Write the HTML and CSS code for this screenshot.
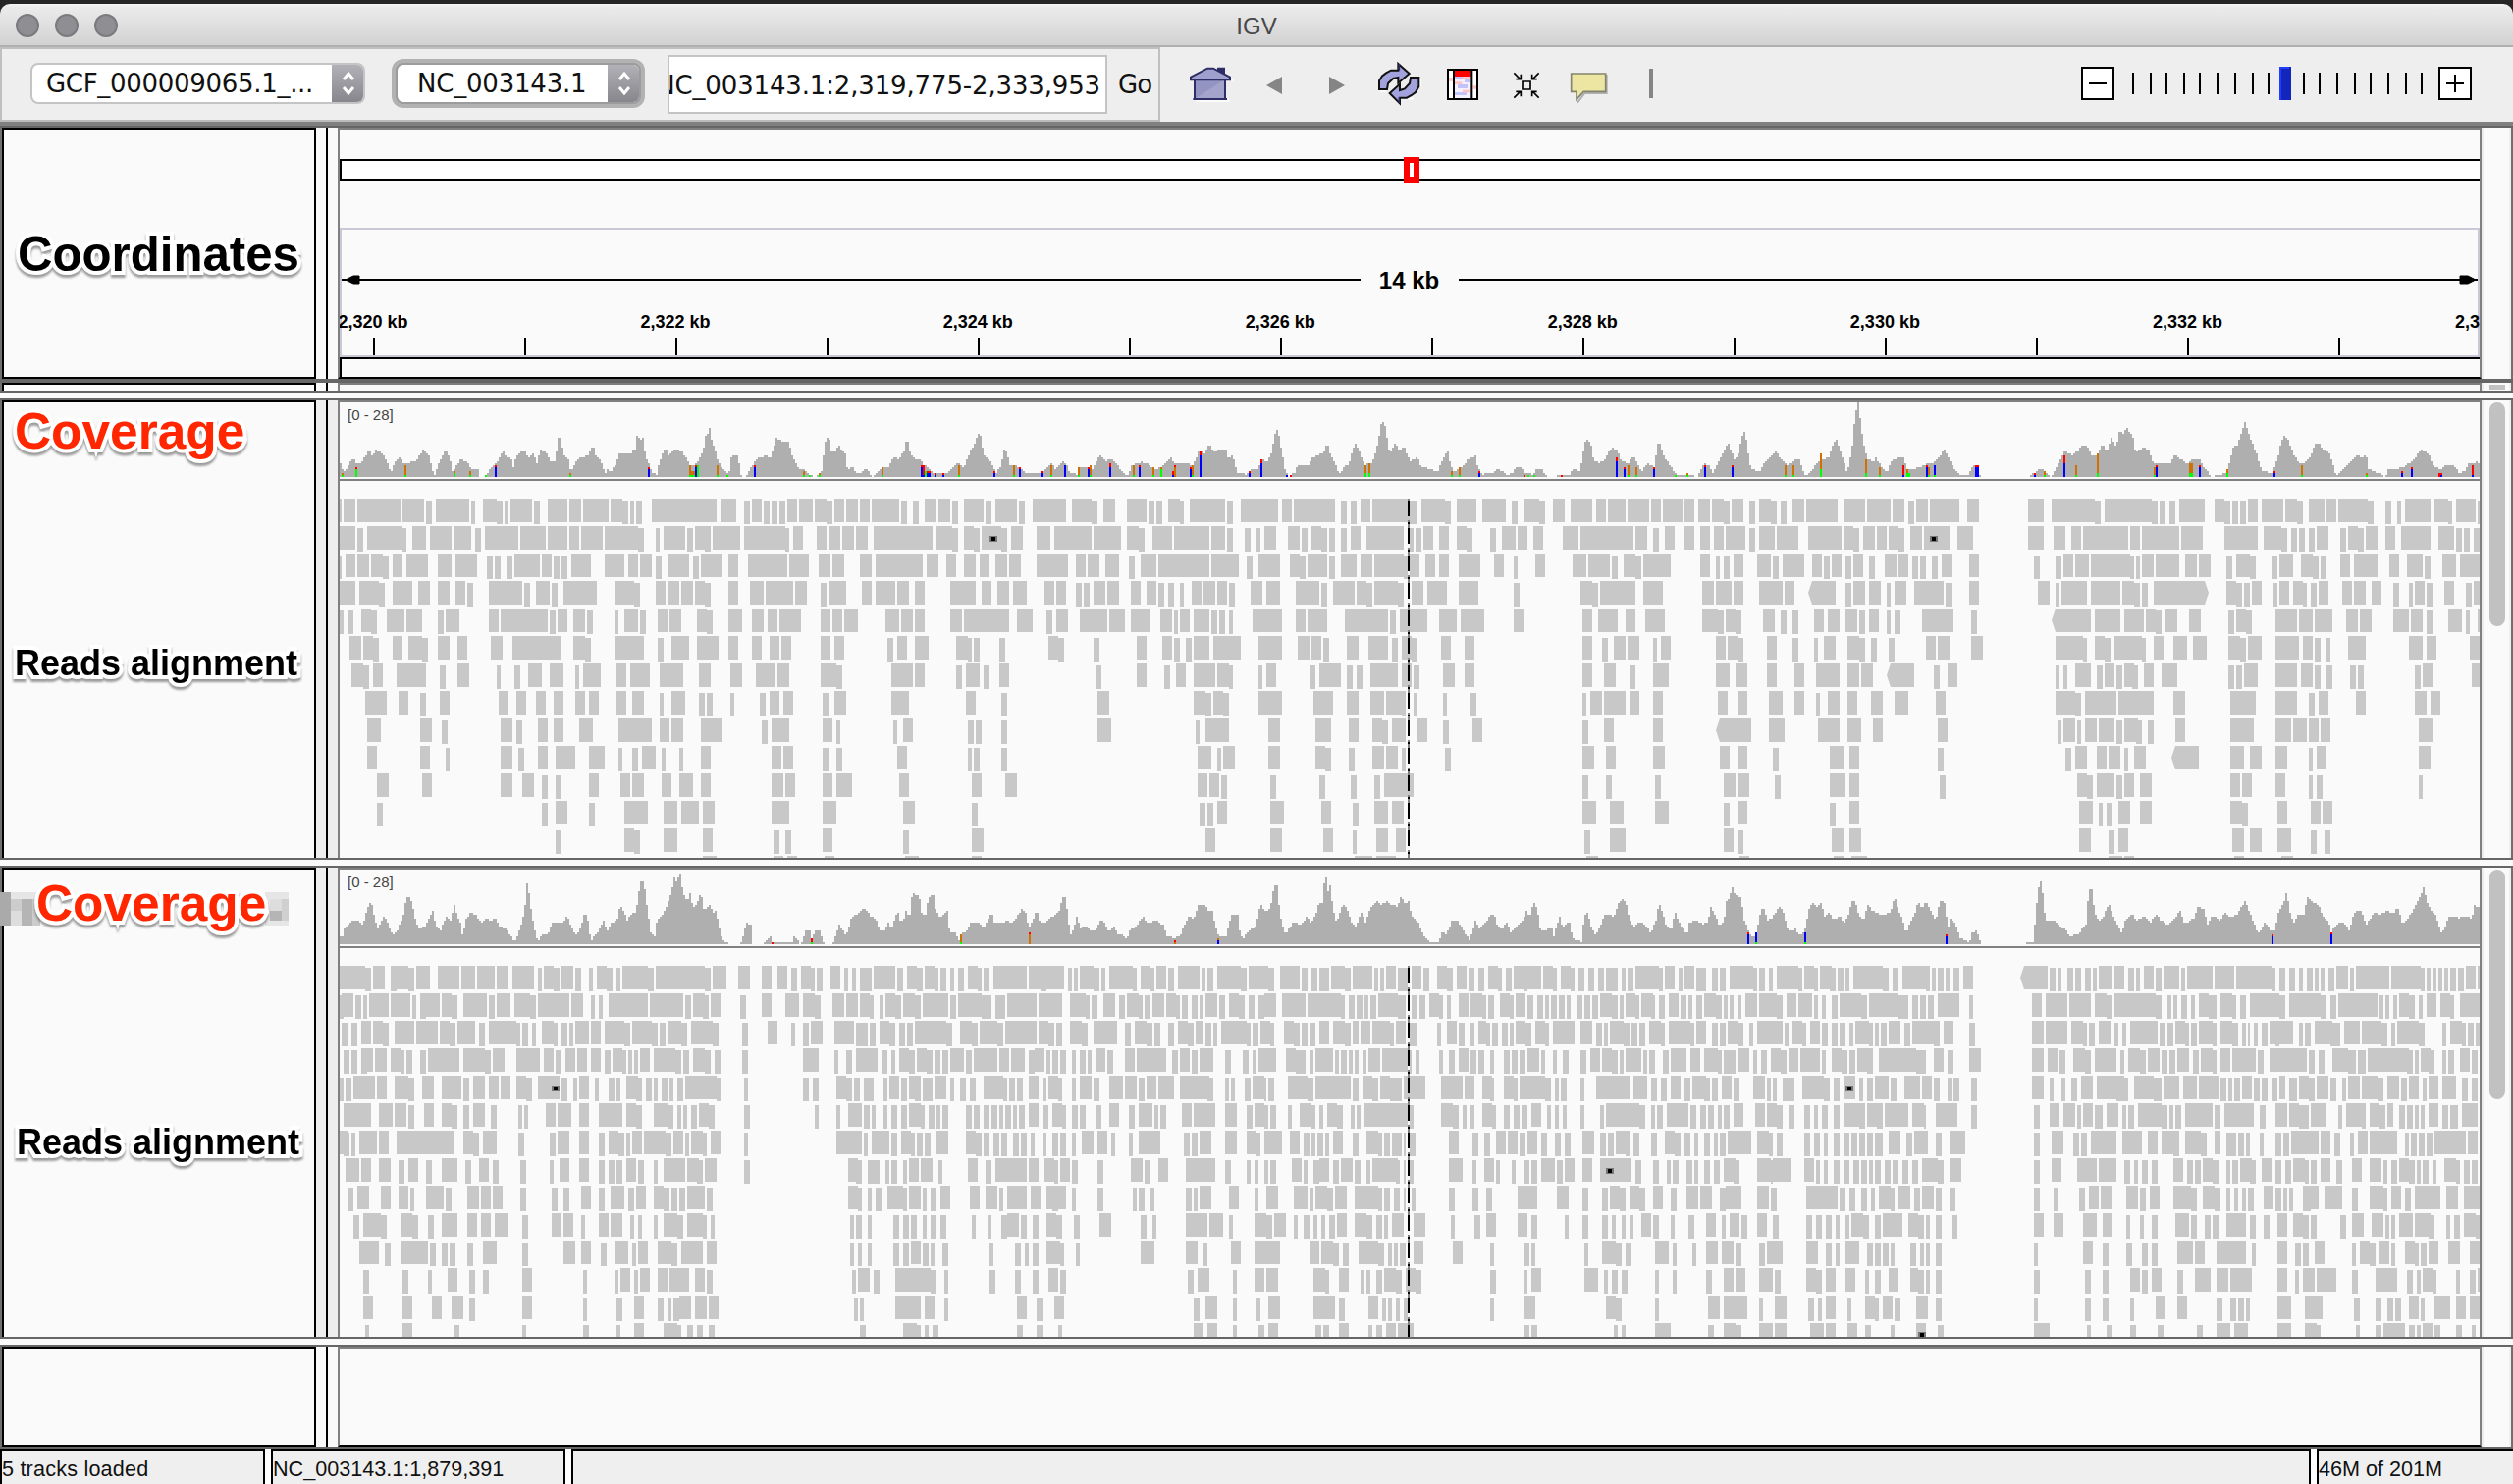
FILE: index.html
```html
<!DOCTYPE html>
<html lang="en">
<head>
<meta charset="utf-8">
<title>IGV</title>
<link rel="stylesheet" href="styles.css">
</head>
<body>
<div class="desktop">
  <header class="titlebar">
    <div class="lights"><i></i><i></i><i></i></div>
    <h1>IGV</h1>
  </header>

  <nav class="toolbar">
    <div class="locus-group">
      <div class="combo genome"><span>GCF_000009065.1_...</span><b><svg viewBox="0 0 34 42"><path d="M12 17l5-6 5 6M12 25l5 6 5-6"/></svg></b></div>
      <div class="combo chrom"><span>NC_003143.1</span><b><svg viewBox="0 0 34 42"><path d="M12 17l5-6 5 6M12 25l5 6 5-6"/></svg></b></div>
      <div class="locus"><span>NC_003143.1:2,319,775-2,333,953</span></div>
      <span class="go">Go</span>
    </div>
    <div class="icons">
      <svg viewBox="33 9 192 192"><path d="M84 159H184V150M196 98V90" stroke="#fff" stroke-width="5" fill="none"/><path d="M150 56h24v26l-24-12z" fill="#2e2d66"/><path d="M81 92h93v60H81z" fill="#a3a3cc"/><path d="M81 92h93l-93 60z" fill="#8686b8" opacity=".5"/><path d="M69 88l51-31h18l51 31v6H69z" fill="#a0a0cf"/><path d="M69 94v-8l51-27h18l51 27v8zM81 95v57M174 95v57M76 153h104" fill="none" stroke="#2e2d66" stroke-width="6"/></svg>
      <svg viewBox="225 9 192 192"><path d="M300 111l48-27v54z" fill="#858585"/></svg>
      <svg viewBox="417 9 192 192"><path d="M540 111l-48-27v54z" fill="#858585"/></svg>
      <svg viewBox="609 9 192 192"><path d="M648 129h18M708 168v-9M730 152h20M771 90v25" stroke="#fff" stroke-width="5"/><path d="M645 123v-26l9-15 12-9 15-8h22V45l34 30-34 29V87l-15 3-16 15-3 18z" fill="#a2a2dc" stroke="#111" stroke-width="6"/><path d="M766 87v28l-10 17-12 9-15 8h-21v17l-31-31 31-28v19l15-5 15-16 3-18z" fill="#a2a2dc" stroke="#111" stroke-width="6"/><path d="M706 45v20M706 165v-18" stroke="#2e2d66" stroke-width="5"/></svg>
      <svg viewBox="801 9 192 192"><path d="M855 63h90v90h-90z" fill="#f4f0ff"/><path d="M855 66h18v84h-18zM930 66h15v84h-15z" fill="#fff"/><path d="M876 63h50v21h-50z" fill="#f00"/><path d="M876 84h24v9h-24zM906 90h18v12h-18zM885 108h30v12h-30zM876 132h36v9h-36z" fill="#c3c3fb"/><path d="M900 84h25v7h-25zM876 100h22v8h-22zM900 125h22v8h-22zM857 88h14v10h-14zM932 112h12v10h-12z" fill="#ffc4c4"/><path d="M855 63h90v90h-90zM873 63v90M928 63v90" fill="none" stroke="#000" stroke-width="6"/></svg>
      <svg viewBox="993 9 192 192"><path d="M1083 99h24v24h-24zM1057 73l20 20M1133 73l-20 20M1057 149l20-20M1133 149l-20-20M1063 92h15v-15M1127 92h-15v-15M1063 130h15v15M1127 130h-15v15" fill="none" stroke="#000" stroke-width="5"/></svg>
      <svg viewBox="1185 9 192 192"><path d="M1340 78v57h-67l-22 29" fill="none" stroke="#b0b0b0" stroke-width="6"/><path d="M1232 75h105v55h-67l-22 24v-24h-16z" fill="#ece6a2" stroke="#84846c" stroke-width="5"/></svg>
      <svg viewBox="1377 9 192 192"><path d="M1470 60h12v90h-12z" fill="#858585"/></svg>
    </div>
    <svg class="zoom" viewBox="2120 68 398 34" shape-rendering="crispEdges">
      <path d="M2121 69h32v32h-32zM2485 69h32v32h-32z" fill="#fff" stroke="#000" stroke-width="2"/>
      <path d="M2128 85h18M2492 85h18M2501 76v18M2173 74v22M2191 74v22M2207 74v22M2225 74v22M2241 74v22M2259 74v22M2277 74v22M2295 74v22M2311 74v22M2347 74v22M2363 74v22M2381 74v22M2399 74v22M2415 74v22M2433 74v22M2451 74v22M2467 74v22" stroke="#000" stroke-width="2"/>
      <path d="M2322 68h12v34h-12z" fill="#1226bd"/><path d="M2322 68h10v2h-8v32h-2z" fill="#1f3cff"/>
    </svg>
  </nav>
  <div class="band"></div>

  <section class="panel header">
    <div class="name"><span class="label big">Coordinates</span></div>
    <div class="split"></div>
    <div class="data"><svg id="ruler" viewBox="346 132 2180 252"></svg></div>
    <div class="scroll"></div>
  </section>
  <div class="bar"></div>
  <section class="panel mini">
    <div class="name"></div><div class="split"></div><div class="data"></div><div class="scroll"><i></i></div>
  </section>
  <div class="divider"></div>
  <section class="panel first">
    <div class="name"><span class="label red">Coverage</span><span class="label small">Reads alignment</span></div>
    <div class="split"></div>
    <div class="data"><svg id="sample1" viewBox="346 410 2180 464"></svg></div>
    <div class="scroll"><i></i></div>
  </section>
  <div class="divider"></div>
  <section class="panel second">
    <div class="name"><svg class="mosaic" viewBox="0 0 296 34"><path fill="#e6e6e6" d="M11 0h30v34H11zM270 0h24v34h-24z"/><path fill="#aaa" d="M0 0h11v34H0z"/><path fill="#ccc" d="M11 7h11v12H11zM33 7h8v27h-8z"/><path fill="#b5b5b5" d="M22 7h11v27H22zM275 19h12v10h-12z"/><path fill="#ddd" d="M11 19h11v15H11zM275 7h12v12h-12z"/><path fill="#d0d0d0" d="M287 7h7v22h-7z"/></svg><span class="label red">Coverage</span><span class="label small">Reads alignment</span></div>
    <div class="split"></div>
    <div class="data"><svg id="sample2" viewBox="346 886 2180 476"></svg></div>
    <div class="scroll"><i></i></div>
  </section>
  <div class="divider"></div>
  <section class="panel last">
    <div class="name"></div><div class="split"></div><div class="data"></div><div class="scroll"></div>
  </section>
  <div class="thin"></div>
  <footer class="status">
    <span>5 tracks loaded</span><span>NC_003143.1:1,879,391</span><span></span><span>46M of 201M</span>
  </footer>
</div>
<script src="tracks.js"></script>
</body>
</html>
```
FILE: styles.css
```css
* { box-sizing: border-box; }
body { margin: 0; background: #262626; font-family: "Liberation Sans", Arial, sans-serif; }
.desktop { width: 2560px; height: 1512px; padding-top: 4px; display: flex; flex-direction: column; overflow: hidden; background: #262626; }
.desktop > * { flex: none; }
svg { display: block; }

.titlebar { height: 44px; display: grid; grid-template-columns: 1fr auto 1fr; align-items: center; background: linear-gradient(#f6f6f6 0, #ebebeb 3px, #d2d2d2 100%); border-bottom: 2px solid #b0b0b0; border-radius: 10px 10px 0 0; }
.titlebar h1 { margin: 0; padding-top: 3px; font-size: 24px; font-weight: 400; color: #484848; }
.lights { display: flex; gap: 16px; padding: 2px 0 0 16px; }
.lights i { width: 24px; height: 24px; border-radius: 50%; background: #8e8e93; border: 2px solid #7b7b7f; }

.toolbar { height: 76px; display: flex; background: #eee; font-family: "DejaVu Sans", sans-serif; color: #111; }
.locus-group { width: 1182px; height: 76px; border: 2px solid #c0c0c0; border-bottom-color: #bbb; display: flex; padding-left: 29px; }
.combo { display: flex; height: 42px; margin-top: 14px; border-radius: 8px; background: #fff; border: 2px solid #c4c4c4; line-height: 39px; overflow: hidden; }
.combo span { flex: 1; white-space: nowrap; font-size: 26px; }
.combo b { width: 34px; margin: -2px -2px -2px 0; background: linear-gradient(#b4b3b9, #85848b); }
.combo path { fill: none; stroke: #fff; stroke-width: 3; }
.genome { width: 341px; }
.genome span { padding-left: 14px; letter-spacing: -.3px; }
.chrom { width: 250px; margin-left: 31px; box-shadow: 0 0 0 4px #b2b2b2; border-color: #9c9c9c; }
.chrom span { padding-left: 20px; letter-spacing: -.2px; }
.locus { width: 448px; height: 60px; margin: 6px 0 0 27px; background: #fff; border: 2px solid #c4c4c4; display: flex; justify-content: flex-end; align-items: center; overflow: hidden; font-size: 26px; letter-spacing: -.15px; padding: 2px 5px 0 0; }
.locus span { white-space: nowrap; margin-left: -60px; }
.go { margin: 21px 0 0 11px; font-size: 26px; letter-spacing: -1px; }
.icons { display: flex; padding: 5px 0 0 19px; }
.icons svg { width: 64px; height: 64px; }
.zoom { width: 398px; height: 34px; margin: 20px 0 0 407px; flex: none; }
.band { height: 6px; background: #808080; border-bottom: 2px solid #666; }

.panel { display: grid; grid-template-columns: 320px 22px 2184px 30px; padding: 0 2px; background: #707070; }
.panel > * { background: #fafafa; min-width: 0; }
.panel .name { border: 2px solid #000; border-bottom: 0; overflow: hidden; display: flex; flex-direction: column; align-items: flex-start; }
.panel .split { background: linear-gradient(90deg, transparent 10px, #000 10px, #000 12px, transparent 12px) #fafafa; }
.panel .data { border: 2px solid #808080; border-bottom: 0; overflow: hidden; }
.data svg { width: 2180px; height: 100%; }
.scroll { padding: 2px 6px 0 8px; box-shadow: inset 2px 0 #ececec, inset -2px 0 #f0f0f0; }
.scroll i { display: block; width: 16px; border-radius: 8px; background: #c1c1c1; }
.header { height: 256px; }
.header .name, .header .data, .last .name, .last .data { border-bottom-style: solid; border-bottom-width: 2px; }
.mini { height: 8px; }
.mini i { height: 5px; border-radius: 0; }
.first { height: 466px; }
.first i { height: 228px; }
.second { height: 478px; }
.second i { height: 234px; }
.first .split, .second .split { background-color: #eee; }
.last { height: 102px; }
.bar { height: 4px; background: #666; }
.thin { height: 2px; background: #666; }
.divider { height: 10px; background: #fafafa; border: solid #666; border-width: 2px 0; }

.label { font-weight: 700; line-height: 1; white-space: nowrap; -webkit-text-stroke: 8px #fff; paint-order: stroke fill; filter: drop-shadow(0 3px 1px rgba(0, 0, 0, .38)); }
.label.big { font-size: 49.2px; margin: 102px 0 0 14px; }
.label.red { font-size: 51.4px; line-height: 51px; color: #ff2600; }
.label.small { font-size: 36px; color: #000; }
.first .red { margin: 4px 0 0 11px; }
.first .small { margin: 193px 0 0 11px; }
.second .mosaic { position: absolute; left: 0; top: 909px; width: 296px; height: 34px; }
.second .red { margin: 9px 0 0 33px; }
.second .small { margin: 200px 0 0 13px; }

.status { height: 36px; display: grid; grid-template-columns: 270px 300px 1772px 200px; gap: 6px; background: #fff; font-size: 21.6px; color: #111; }
.status span { background: #efefef; border: 2px solid #000; border-bottom: 0; line-height: 37px; white-space: nowrap; overflow: hidden; }
.status span:first-child { letter-spacing: .2px; }
.status span:last-child { border-right: 0; }

.cov { fill: #afafaf; }
.reads { fill: #c8c8c8; }
.range { font-size: 15px; fill: #444; }
.tick { font-size: 18px; font-weight: 700; text-anchor: middle; }
.span { font-size: 24px; font-weight: 700; text-anchor: middle; }
```
FILE: tracks.js
```js
// Reads: "a-b" sits on the row, "a_b" is drawn 2px lower, "a<b" / "a>b" have a tapered end.
// Coverage: "x,y" knots. Mismatches: x followed by colour letter + top y, stacked downwards.
const X = 1.96, W = 1.6333;
const sample1 = { top: 508, base: 486, line: 488, bottom: 874, tiles: [
{ x: 0, k: X, base: 318, ky: 3,
 cov: '678,276 682,276 686,306 698,276 706,258 712,276 720,276 728,258 738,234 742,254 751,234 755,240 759,240 768,258 776,285 780,306 788,276 798,258 806,276 830,270 845,234 856,250 862,288 868,312 876,276 890,236 898,258 903,300 910,288 920,260 935,275 942,294 955,297 959,318 966,318 973,312 980,288 990,276 1005,240 1012,258 1020,255 1025,288 1030,258 1045,237 1058,258 1066,246 1072,276 1080,234 1086,246 1090,237 1098,270 1110,268 1113,198 1120,200 1124,235 1128,258 1136,262 1140,306 1148,276 1160,258 1175,252 1184,218 1190,252 1200,270 1208,306 1214,294 1220,306 1230,276 1237,246 1260,246 1264,234 1270,234 1272,192 1278,205 1284,198 1288,246 1298,288 1304,306 1312,312 1316,276 1328,228 1335,250 1348,232 1362,240 1372,264 1380,285 1386,280 1396,264 1404,240 1408,195 1413,188 1417,165 1420,200 1428,234 1434,270 1442,290 1455,310 1461,252 1474,252 1478,304 1482,318 1490,318 1500,288 1510,264 1530,252 1537,264 1545,228 1550,198 1568,213',
 snp: '684o306g312 711r288g294 809o282g312 907o300g306 939o300g312 970g312 990r282b288 1139o306g312 1296r288b294 1378o282g312 1382o300g312 1386o300g312 1390r282b288 1394g285 1433o282g312 1452g312 1507r282b288',
 rows: `678-682 686-710 713-800 804-847 851_862 870-937 941_949 964-992 992_1004 1007_1015 1019-1062 1066_1078 1094-1133 1137-1160 1164-1215 1219-1243 1243_1254 1258_1266 1270_1282 1301-1431 1439-1470 1486_1497 1501-1521 1525_1537 1541_1552 1556_1568
678-710 713_725 733-804 804_811 823-851 858-902 906-941 949_960 968-1035 1039-1090 1094-1133 1137-1156 1160-1203 1207-1274 1274_1286 1309_1317 1325-1368 1372_1384 1388-1419 1407_1419 1423-1478 1486-1568
678_682 690-710 713-737 741-764 764_776 784-804 811-855 874-902 909-953 972_984 988_1000 1011_1023 1027-1078 1082-1102 1105_1117 1121_1133 1141-1180 1207-1247 1254-1274 1278-1301 1309_1321 1333-1376 1384_1396 1399-1443 1454-1474 1494-1568
678-710 717-757 757_768 784-823 835-858 874-898 909-929 933_945 976-1043 1047_1058 1070-1098 1102_1113 1125-1192 1227-1266 1266_1278 1309-1329 1333-1356 1360-1384 1388-1407 1407_1419 1454-1474 1497-1525 1529-1568
678_686 694_706 721-741 741_753 772-808 811-843 874_886 890-917 976-996 1000-1094 1098_1109 1113-1133 1145-1168 1172_1184 1227_1235 1247-1274 1278_1290 1313-1333 1337-1360 1392-1411 1411_1423 1454-1482 1501-1525 1533-1552 1556-1568
698-721 725-745 745_757 784-804 815-843 843_855 874-898 913-933 980-1004 1023-1121 1145-1168 1168_1180 1227-1286 1313_1325 1341-1376 1392-1435 1454-1474 1501-1521 1537-1556 1560-1568
702-725 725_737 745-764 792-851 878_890 913-937 992_1000 1027_1039 1054-1082 1098-1125 1149_1156 1164-1200 1231-1250 1258-1298 1317-1364 1396-1419 1458-1482 1509-1548 1552-1568
729-772 796-815 839_851 878-898 996-1015 1031-1051 1070-1090 1105-1125 1149-1168 1176-1196 1231-1250 1262-1286 1317_1325 1341-1368 1396_1407 1411_1423 1458_1466 1517_1529 1537-1556 1564-1568
733-760 839-862 882_894 1000-1023 1031_1043 1074-1094 1105-1125 1156-1184 1235-1301 1317-1337 1341-1364 1399-1443 1521_1533 1541-1568
733-753 839-858 890_898 1000-1023 1035_1047 1074-1094 1109-1149 1176-1207 1235_1243 1262_1274 1282-1309 1321_1329 1356_1364 1399-1419 1541-1560 1564-1568
753-776 843-862 1000-1023 1043-1066 1082_1094 1109_1121 1176-1196 1239-1258 1262-1286 1321-1341 1356-1384 1399-1419 1541-1564
753_764 1082_1094 1109-1133 1176_1188 1247-1294 1325-1352 1360-1396 1403-1427 1541-1568
1109_1121 1247-1266 1266_1278 1325-1352 1403-1423 1544_1556
1403-1431 1544-1564` },
{ x: 800, k: X, base: 258, ky: 3,
 cov: '0,150 8,150 12,186 20,210 28,232 40,236 48,250 58,258 66,252 72,246 78,174 82,132 88,140 92,180 100,182 106,156 112,172 120,186 124,232 136,230 142,246 150,250 158,232 166,236 172,258 182,246 195,228 206,228 212,205 218,195 226,205 232,188 238,180 243,132 247,172 256,200 270,204 276,220 286,228 296,246 322,248 332,234 345,216 356,228 366,196 370,174 378,160 384,126 390,134 396,186 404,204 412,216 420,246 430,225 437,174 443,186 449,222 458,222 470,230 482,246 510,246 522,230 530,214 540,234 552,212 560,214 568,246 582,250 586,228 604,226 614,234 622,208 628,192 640,208 648,202 662,216 674,246 684,254 692,222 710,212 722,216 734,234 750,230 760,212 770,200 778,216 790,214 804,216 812,222 820,205 826,174 836,186 846,156 856,180 868,174 880,174 884,200 894,192 902,246 922,250 932,234 944,232 952,198 960,216 970,190 974,160 980,108 986,134 992,186 998,234 1006,258 1018,242 1024,220 1046,222 1052,200 1066,188 1076,180 1082,150 1088,188 1098,216 1106,252 1114,230 1126,218 1132,180 1138,156 1144,168 1150,198 1158,220 1172,212 1180,174 1186,130 1190,96 1196,90 1201,132 1204,172 1210,180 1218,150 1224,176 1236,164 1240,186 1248,210 1262,196 1270,228 1292,234 1302,246 1312,205 1322,176 1328,216 1336,246 1346,230 1354,222 1362,206 1378,192 1382,222 1390,250 1415,246 1422,235 1434,240 1442,252 1452,245 1460,230 1470,230 1476,246 1492,250 1500,234 1512,234 1518,252 1524,258 1538,258 1540,253 1568,253',
 snp: '37o240g252 49g252 69o246g252 194o228g252 272r222b228 276r222b252 282g240 286r240b246 290r240b246 300r246b252 316r246b252 347o222g252 417r240b246 457o222g252 467r228b234 512r240b246 531o222g252 559b222 586o228g252 606r228b234 610o222g252 649r216b228 696o222g252 708r222b228 735o228g252 751o228g234 774r240b252 778r222o228 809r228b234 813o222g252 829r180b192 927r240b246 951r204b216 1002b252 1009r252 1158o222g246 1166o216g246 1331o240g252 1346o228g252 1386r240b246 1476r252 1484g252 1496g252 1550r252',
 rows: `4-24 27-55 59-82 82_94 98-118 122-145 149-169 172-227 231_243 255_267 278-302 306-329 333_345 357-396 400_412 419-463 466_478 494-561 572-612 612_623 635-659 682-721 725_737 741_752 764-788 788_796 808-878 882_894 909-984 992-1011 1015-1098 1109_1121 1129_1141 1149-1168 1172-1247 1247_1262 1270-1317 1317_1329 1341-1380 1392-1439 1450_1462 1474-1505 1505_1517 1533-1556
0_8 16-35 63-82 86-110 114-137 141-165 176-294 302-333 333_345 357-376 376_388 392-431 431_443 451-474 502-529 537-612 615-670 682-706 706_717 733-772 776-847 851-878 882_894 917_929 941_949 956-980 1004-1027 1031_1043 1051-1070 1070_1082 1086_1098 1109_1121 1129-1149 1160-1235 1247_1254 1258_1270 1274-1294 1305-1325 1341-1360 1360_1372 1407_1419 1431-1458 1462-1482 1494-1513 1552-1568
0-4 7-47 67-90 94-118 149-172 180-274 282-306 321-341 357-380 388-408 419-443 447-470 502-564 580-600 604-627 639-666 686_698 710-741 745-847 851-906 921_933 945-988 1007-1027 1027_1039 1043-1082 1086_1098 1109-1141 1149-1172 1176-1235 1235_1243 1247-1266 1278-1298 1305-1325 1345-1388 1415-1435 1454_1462 1497-1517
0-16 20-43 71_82 86-122 153-172 180-220 223-247 259-278 329-380 392-412 423-447 455-482 517-537 541-561 580_592 596_608 615-639 643-666 690-710 721-741 745_757 764_776 788_796 811-831 835-858 862-882 886_898 929-953 960-988 1019-1066 1070_1082 1094-1137 1141-1160 1160_1172 1176-1223 1223_1235 1250-1274 1282-1321 1345-1384 1454_1466
0-31 71-90 94-114 118-145 200-227 231-255 259-278 329-353 357-447 463-494 521_533 541-564 588-643 647-678 690-729 749-772 776_784 788-808 815-847 851_862 866_878 886_894 933-992 1019-1039 1043-1082 1117-1203 1207_1219 1227-1282 1305-1341 1348-1396 1454-1474
0-12 71-90 98-118 204_216 223-243 259-286 341-365 365_372 376_388 427_439 525-545 545_557 615_627 702-721 753-772 776_788 800_811 815-847 855-909 945-992 1023-1047 1051-1070 1074_1086 1121-1145 1164-1203 1211_1223 1231-1250 1250_1262 1309-1329 1356-1376
0-8 71-102 102_114 212-255 259-278 341_353 361-388 396_408 427-447 619_631 702-721 757_768 780-800 815-858 862-886 886_894 945_953 960-980 1047_1058 1065-1109 1121_1133 1141_1152 1168-1223 1231-1250 1254_1266 1313-1337 1356-1376
0-16 74_86 98-122 212-247 361-380 431_443 623-647 815-839 839_851 855-874 874_886 945-992 1054-1094 1121-1145 1168-1196 1200-1239 1231_1239 1254_1262 1313_1321 1368_1380
0-8 74-94 102_110 216_223 235-255 365_376 380_392 431_443 623-651 819_827 839-886 964-988 1058-1090 1125-1145 1172-1192 1192_1203 1211-1239 1262-1282 1313_1325 1372-1392
0-16 74_86 102_114 223-243 365_372 376_388 431_443 823-851 862_870 874-898 964-988 1058-1078 1078_1090 1125_1137 1172-1196 1200-1223 1231_1239 1317_1329
0-20 74-94 102-133 227-247 372-392 439-463 823-843 847-866 870_882 968_980 1066_1078 1129_1141 1176_1188 1196-1254
0-8 74-102 235-259 372_384 827_839 843_855 862-882 968-996 1070-1090 1133_1145 1176-1203 1211-1235
0_12 74-94 235_247 372-396 839-858 968-992 1074-1094 1133_1141 1180-1203 1219-1239
4-24 78-98 239-267 372-392 1137-1172 1180-1219` },
{ x: 1600, k: W, base: 318, ky: 3,
 cov: '0,306 6,294 16,300 22,230 26,198 34,216 38,264 48,276 58,264 64,240 70,228 78,236 84,270 96,276 104,252 112,280 118,300 128,276 140,290 144,220 149,216 156,256 168,290 176,312 206,314 210,318 216,300 222,276 230,282 236,306 244,280 252,252 262,212 268,240 274,270 280,240 286,190 290,174 296,250 300,294 316,300 322,276 334,256 342,238 350,262 360,282 370,272 380,258 388,306 392,318 400,300 410,276 420,264 430,258 436,222 442,198 448,236 456,280 460,304 468,240 472,156 477,90 480,90 482,145 488,220 494,264 504,270 508,258 514,276 526,306 534,270 544,258 554,260 560,294 580,290 594,276 606,272 614,258 622,234 630,262 638,294 648,312 662,312 670,280 676,280 680,312 688,318 764,318 770,306 782,292 790,300 798,318 804,306 812,276 822,240 834,250 844,240 852,216 860,228 868,252 876,250 886,216 892,240 900,198 908,228 914,174 918,188 926,168 936,198 940,240 952,228 962,234 970,276 998,276 1006,246 1014,262 1026,276 1036,264 1046,264 1052,282 1064,312 1066,318 1076,312 1090,306 1098,264 1102,228 1110,220 1116,180 1122,150 1128,186 1136,220 1142,250 1150,300 1168,306 1176,264 1180,228 1188,186 1196,214 1202,244 1212,276 1220,276 1232,252 1238,216 1246,216 1252,234 1262,240 1268,276 1274,318 1282,300 1294,276 1308,252 1316,258 1324,252 1328,294 1350,310 1356,318 1360,294 1384,290 1394,276 1404,264 1414,234 1428,248 1434,282 1448,294 1456,280 1470,282 1478,306 1490,300 1492,276 1504,276 1508,270 1513,282',
 snp: '76r258b270 90r288b294 97o282g312 110o288g312 138r288b294 174g312 195o306g312 223r282b288 269r282b288 357o282g312 371o282g312 416o246g294 491o264g306 515o288g312 553r282b312 561o294g306 565o306g306 593r282b288 597o288g312 606b282g312 675r282b288 679r282b288 772r306b312 789o300g312 821r252b276 841o282g312 877o246g306 971o288g312 975r282b288 1031o276g306 1034o276g306 1047r282b288 1092o294g306 1171r300b306 1216o282g312 1324o306g312 1383r300b306 1399r288b294 1446r306 1450r306b312 1501r282b312',
 rows: `0-36 42-59 62-91 95-131 134-150 154-186 189-206 212-232 235-255 255_265 268-287 297_307 314-333 333_343 350_359 369-389 392-444 454-490 493-532 536-555 562_572 575-595 598-647 660-679 761-787 800-872 872_882 889-967 967_977 980_990 996_1006 1013-1055 1071-1088 1088_1098 1101_1111 1114_1124 1127-1143 1150-1186 1189-1209 1209_1218 1228-1254 1258-1274 1277-1326 1326_1336 1356_1365 1375_1382 1388-1431 1437-1460 1460_1467 1473-1506 1509_1513
0-13 16-105 108-127 137_147 157-173 189-206 216-232 238-255 258-291 297_307 314-340 343-379 395-451 454-470 470_480 487-506 510-526 529-546 546_555 565-585 588-630 644-670 761-787 804-823 833-849 853-928 931-947 951-1013 1016-1052 1088-1143 1153-1183 1183_1192 1199_1209 1212_1222 1228_1238 1241-1261 1281_1290 1294-1310 1310_1319 1323-1343 1356-1372 1382-1431 1444-1470 1473_1483 1486_1496 1503_1513
3-26 29-65 69_78 88-108 108_118 121-167 216-232 242_248 255_265 271-287 310-333 336_346 353-389 402-418 421_431 434-451 457_467 470-487 497_506 523-542 546-562 568_578 581_591 601_611 617-634 663-679 771_781 807_817 820-836 840-862 866-931 931_938 941_947 951-970 973-1013 1022-1042 1045-1065 1091_1101 1107-1130 1130_1140 1166_1176 1179-1202 1215-1235 1235_1245 1248_1258 1281-1297 1303-1343 1362-1379 1392-1418 1421_1431 1450-1473 1480-1513
16-36 36_46 49-108 121-154 219-238 242-268 271-287 314-353 356-372 395<441 457_467 470-490 497-516 526_532 539-559 572-621 624_634 663-679 777-797 807_813 817-859 866-915 918-938 938_947 951_960 970>1062 1091-1107 1107_1117 1120_1130 1134-1150 1169_1176 1179-1196 1202-1218 1218_1225 1232_1241 1245-1261 1284-1300 1303-1323 1333-1349 1369_1379 1395_1401 1405-1421 1424_1434 1454-1470 1490_1499 1503-1513
20-36 46-78 91-108 124-157 219-245 245_255 258-274 274_284 320-340 350_359 369_379 405-421 428-448 457-477 480_490 497-513 526_532 539_549 585-637 666_676 800<866 872-915 921-954 957-973 973_983 990-1009 1029-1049 1094_1104 1107-1124 1124_1134 1173-1209 1212-1235 1238-1267 1290-1310 1313-1333 1369-1395 1398-1418 1424_1434 1460-1483 1490_1496 1509-1513
20-36 52_62 72-91 95-114 137_144 150-167 242-258 261-277 277_287 327-343 369_379 405_412 421-441 461-480 480_490 500_510 529_539 591-608 611-630 666-686 807-853 853_859 872-889 889_898 905-951 951_957 970-987 1003-1026 1036-1058 1094-1114 1114_1124 1127-1150 1173-1212 1218-1235 1238_1248 1258_1264 1294-1323 1395-1418 1424-1441 1496-1513
20-36 56-75 98_108 137-163 242-265 274-294 327-343 372-389 408-448 461-480 483-503 526<572 604_614 627-644 807_813 820_826 840-866 875_885 889-905 908_918 921-938 934_944 954-970 983-1009 1094_1104 1107_1117 1120-1143 1173-1209 1215-1235 1238_1248 1258_1267 1297_1307 1310_1320 1405_1414 1418-1434 1499-1513
20_26 33-52 56-91 98-114 137-154 245-261 278-294 330-353 372-389 408_415 428-448 461-477 500-519 539-562 608-624 807-840 840_849 856-908 911-970 1003-1022 1098-1140 1173-1209 1228_1238 1245-1261 1307-1323 1405-1424 1431-1447
20_29 56-72 137-154 242<301 330-356 412-448 461-483 503-519 611-627 810_817 820-840 843_849 856-875 879-905 908_918 921-944 941_951 960_970 1006-1022 1098-1137 1173-1199 1202-1225 1228-1245 1248-1264 1411-1434
20-39 59-75 137-157 248-265 278-294 336_346 431-454 464-480 611_621 823_833 840-859 875-892 895-915 921_928 938-957 1000<1045 1098-1120 1130-1150 1173-1192 1228_1235 1241-1258 1411-1431
20_29 59_69 140_150 255-274 278-297 340_350 431-457 464-480 614_624 843-859 859_869 875-905 908_918 921-938 947-967 1098-1114 1117-1134 1173-1189 1228_1235 1241_1251 1411_1418
20-42 65-88 140-163 255_265 278-294 431_441 464-480 846-869 879_885 892_902 911-931 947-967 1098-1117 1117_1127 1176-1192 1232-1248 1251-1267
23_33 65-91 255-271 278_287 434-454 464-483 846-866 895_905 911-928 1101-1120 1130-1150 1176-1199 1232_1241 1254_1264
26-46 281-297 438-454 467-493 895-918 921-938 1104-1120 1183-1202` }
]};

const sample2 = { top: 984, base: 962, line: 964, bottom: 1362, tiles: [
{ x: 0, k: X, base: 225, ky: 2.442,
 cov: '678,205 684,205 688,185 696,175 704,166 718,166 724,180 732,145 738,122 743,125 748,160 754,185 762,166 768,152 776,178 783,200 792,195 800,172 806,150 812,106 820,110 824,130 830,165 838,190 848,180 858,160 864,142 870,176 880,190 892,155 900,165 908,127 913,155 920,175 924,205 930,165 940,145 952,155 960,172 970,160 980,165 990,160 998,180 1012,190 1020,205 1026,218 1034,205 1042,170 1048,140 1051,74 1055,78 1058,118 1066,180 1074,218 1082,200 1094,200 1104,170 1124,170 1132,155 1140,180 1150,204 1160,185 1168,145 1174,165 1180,218 1188,200 1194,195 1206,165 1212,195 1220,172 1232,165 1238,127 1246,145 1252,165 1262,150 1270,145 1276,95 1282,58 1288,90 1294,150 1300,200 1308,204 1312,165 1324,152 1334,120 1342,90 1346,58 1350,72 1360,46 1363,95 1372,120 1378,98 1384,138 1392,120 1400,96 1406,145 1416,127 1424,145 1430,142 1436,180 1442,215 1448,221 1454,221 1455,225 1478,225 1484,205 1490,172 1500,176 1503,225 1524,225 1528,216 1540,205 1542,220 1568,221',
 snp: '1542r221',
 rows: `678-729 729_741 745-768 780-815 815_827 780_792 831-858 874-917 921-949 953-988 992-1015 1023-1066 1074_1082 1086-1105 1105_1117 1121-1145 1149_1160 1176_1184 1192-1211 1211_1223 1231_1239 1243-1294 1294_1305 1309-1407 1407_1419 1423-1450 1474-1497 1521-1541 1552-1568
678_686 682-706 710_721 725_733 737-776 780-819 823_831 839-878 839_851 882-902 902_913 925-972 976_988 992-1019 1027-1058 1058_1070 1074-1137 1141-1164 1180_1188 1196_1203 1215-1294 1298-1364 1368_1380 1384-1407 1403_1415 1419-1439 1478_1490 1521-1541
682_694 702_713 721-741 745-764 764_776 788-827 831-874 878-898 898_909 913-949 956_968 976-1031 1031_1039 1043_1054 1062_1070 1082-1105 1105_1113 1121_1133 1137_1145 1149-1176 1180-1200 1207-1247 1247_1258 1262-1301 1301_1313 1317_1329 1333-1360 1360_1372 1380-1423 1423_1435 1482_1494 1533-1552
686_698 702_713 721-745 721_733 749-772 780-800 800_808 811_823 839_851 855-917 925-968 968_980 984-1007 1031-1078 1086-1105 1109_1121 1129-1149 1152-1172 1180-1200 1207_1219 1223-1243 1243_1250 1254_1262 1266_1274 1278-1298 1305-1348 1348_1360 1364_1376 1384-1407 1407_1419 1427_1439 1482_1494
678_686 690_702 706-749 753-772 788-815 815_827 843-866 882-921 925_937 945-968 976-996 1000-1019 1031-1051 1051_1062 1074-1117 1121_1133 1145_1152 1156-1176 1188_1196 1215_1227 1231_1239 1250-1274 1270_1282 1290_1301 1305_1313 1321_1333 1337_1345 1352_1364 1368-1431 1431_1439 1486_1494
686-741 757-784 788-811 815_827 847-866 882-902 902_913 925_937 945-968 980_992 1035_1043 1047_1054 1090-1109 1113-1141 1156-1176 1196-1243 1250-1270 1270_1282 1305-1333 1333_1345 1352_1360 1364_1372 1380_1392 1396-1415 1415_1427 1486_1497
678-694 686_698 702_710 717-753 757-776 792-906 925-945 945_956 964-992 1035_1047 1098_1109 1113-1137 1156-1176 1196_1207 1215-1235 1235_1247 1250_1258 1262-1282 1286-1329 1329_1341 1345-1364 1368_1376 1380-1403 1403_1411 1419-1439 1486_1494
690-717 721-741 757-780 796_808 815-835 851_862 882-913 929_941 956-976 984_996 1039_1051 1098_1105 1117-1137 1156-1176 1196_1207 1215_1227 1231_1243 1250-1270 1274_1286 1305_1313 1324-1368 1372-1396 1392_1403 1407-1431 1486_1497
694_706 713-737 760-780 796-815 819_827 851-886 890_902 933-956 960-980 984-1004 1039_1051 1102_1113 1125_1137 1160-1180 1196_1207 1219-1247 1254_1266 1270-1290 1305-1325 1325_1337 1341_1352 1356_1368 1372-1407 1411_1423
706_717 725-760 760_772 800-823 823_835 855_866 882-913 933-953 960-980 988-1015 1043_1054 1102-1121 1125-1145 1160_1168 1196-1215 1219-1243 1258_1266 1274_1282 1305_1313 1325-1352 1352_1364 1372-1403 1403_1411 1419_1427
717-757 768_780 800-855 858_870 882_894 898_909 933_945 964-992 1043_1054 1125-1149 1160-1180 1200_1211 1227-1254 1262_1270 1274-1294 1313-1341 1341_1352 1360-1404 1411-1431
725_737 804_815 855_862 894-913 937_949 964_976 1043-1062 1164_1172 1227_1235 1239-1258 1266_1274 1278-1298 1313-1333 1337-1376 1388-1407 1411_1423
725-745 804-823 862-882 902-925 937_949 1043-1062 1164_1172 1231_1243 1266-1286 1313_1325 1333_1341 1345_1356 1356-1380 1388-1411 1415-1435
729_737 804-823 906_917 1043_1051 1164_1176 1231_1239 1266-1286 1325-1352 1352_1360 1372_1384 1392_1403 1415_1427` },
{ x: 800, k: X, base: 276, ky: 3,
 cov: '0,270 14,270 18,252 25,264 28,276 36,264 40,234 50,234 53,260 60,236 70,236 75,270 82,276 95,276 100,250 108,216 114,232 120,250 126,230 132,192 140,186 148,180 156,168 164,176 170,192 180,198 190,232 198,234 206,212 212,228 218,204 224,176 230,205 238,200 242,168 248,200 254,116 260,124 268,130 273,186 280,190 286,130 296,126 300,172 310,198 318,180 324,170 328,240 340,240 346,268 352,246 362,234 372,208 388,208 396,230 404,205 412,176 418,210 432,212 444,205 454,212 462,192 472,170 480,180 486,225 496,200 502,172 508,208 518,212 528,196 540,186 549,168 553,132 560,134 564,190 570,250 576,230 582,192 590,230 600,216 610,234 620,234 630,204 638,210 646,240 656,218 664,246 676,250 682,264 688,234 700,222 714,190 722,208 742,206 754,216 762,250 768,252 778,258 788,250 796,222 806,192 816,200 824,158 838,158 844,172 854,172 858,222 866,250 880,252 886,216 892,186 904,188 908,240 914,258 926,234 940,222 944,186 950,152 956,176 964,172 970,154 976,98 982,96 986,160 992,216 1000,246 1012,212 1032,214 1042,192 1050,216 1060,180 1066,150 1072,152 1076,90 1080,74 1084,114 1088,96 1092,150 1100,210 1110,172 1114,150 1122,172 1130,205 1138,228 1150,176 1158,210 1166,172 1174,156 1182,146 1190,154 1202,146 1210,156 1222,160 1230,126 1236,148 1246,146 1250,186 1262,205 1272,238 1282,266 1304,270 1312,236 1320,250 1330,206 1342,205 1352,228 1366,264 1378,206 1386,230 1398,212 1408,188 1416,188 1422,222 1434,228 1440,206 1448,238 1458,228 1474,198 1480,172 1486,196 1494,148 1502,172 1508,234 1520,234 1530,222 1534,258 1540,222 1546,192 1552,222 1568,205',
 snp: '53r258g270 351o246g270 488r240o246 778r264o270 864o258b264',
 rows: `0-4 12_24 31-51 51_59 63_74 90-110 118_126 133_141 149_172 176-220 223_235 243-263 263_274 278-298 298_306 310_321 329_337 345_357 365-384 384_392 396_408 416-482 486-557 510_521 564_572 576_584 588-615 615_627 631_639 647-694 694_702 710-729 729_737 741-760 764_776 784-827 831_839 843_855 862-909 909_921 925-964 964_976 988-1027 1031_1043 1051_1062 1066_1086 1090-1117 1117_1129 1133-1172 1176_1184 1188_1196 1200-1219 1223_1243 1250-1270 1274_1286 1301-1321 1321_1333 1341-1360 1364_1376 1384_1396 1403-1423 1423_1431 1439_1450 1454-1509 1474_1482 1513-1533 1533_1541 1548-1568
0-27 35-59 59_71 94-118 122-145 149-169 169_176 188_196 200-220 220_231 235-259 259_270 274-325 329_341 345-392 392_412 419_439 443-502 506-553 568-600 600_608 612_623 635-659 666_678 682-706 706_713 717_729 733-757 760-780 780_788 792_804 811_823 827_835 839-862 866_878 886-906 906_917 925_937 945_956 956-980 992-1039 1043-1109 1109_1117 1125_1137 1141_1152 1156_1164 1168_1180 1184-1223 1223_1239 1250_1262 1266_1278 1286-1305 1305_1313 1321_1329 1345-1364 1368-1392 1392_1399 1403_1415 1427-1447 1447_1454 1458-1478 1482_1494 1501_1513 1517_1525 1529_1541 1544_1556 1560_1568
12_20 35_47 51-74 98-137 141_165 169_180 188-208 208_220 227_239 243_255 259-321 321_333 349-372 372_384 388-423 423_435 439-502 506-525 525_537 541_553 568-592 592_604 615-662 678_690 698-721 721_733 737_749 764_776 784-804 804_815 819-835 839_851 855_862 870-921 921_929 933_945 949-968 968_976 996-1015 1015_1027 1031_1043 1047_1058 1066-1086 1094-1117 1117_1129 1133-1145 1149-1168 1172-1207 1207_1215 1219-1239 1247_1262 1301_1309 1321-1341 1345_1356 1368_1376 1384-1399 1399_1407 1411_1423 1431_1443 1447_1454 1458-1478 1478_1490 1497-1517 1517_1525 1533-1568
35-67 98_106 122_133 141-184 192_204 212_220 227-247 247_259 263-282 282_294 298_310 314_325 329-357 361_372 376-423 427-447 451-478 486_498 498-517 521_529 533_545 549_561 572_580 588_600 604_612 619-639 643_655 678-698 702-760 772_784 788-808 811_823 827-855 878_890 913_925 933_941 945-980 1000-1019 1019_1039 1047_1054 1058-1094 1098_1105 1109_1121 1125_1133 1137_1145 1152_1160 1164-1188 1192-1243 1247_1250 1258_1266 1305_1313 1325_1337 1345-1364 1368_1380 1384_1396 1407_1415 1435_1447 1450_1462 1466_1478 1482-1505 1509_1517 1533_1541 1552_1564
35_47 55_67 102-122 122_133 137_149 157_176 196_204 208-227 231_243 247-270 259_270 274_294 298-321 329_337 349_361 368_380 396-435 435_443 447_459 463_474 486-506 514_521 525-545 545_553 572_580 588-612 615_627 647-674 678-702 706_717 721-741 745-776 788-847 843_855 878_886 890_898 917_929 933-956 956_960 964_976 1004-1043 1043_1054 1058-1129 1133_1145 1152-1172 1172_1184 1188-1207 1207_1231 1235-1278 1309-1352 1356-1376 1392-1411 1407_1415 1435-1454 1454_1462 1466-1517 1517_1529 1537_1544 1548_1560
59_67 102_110 125-153 157_169 172_180 196_204 212_223 231_243 247-270 270_278 286_298 302_310 314_325 361_372 376_388 396_408 412_423 427_435 439_451 455_463 466_478 486-506 514_525 533-553 553_561 572_584 588_600 619_631 647-666 686_698 706-733 737_745 749_760 792-811 815-858 878-902 921_933 937-956 956_964 968_980 1004_1011 1027-1051 1051_1058 1066_1074 1082-1102 1102_1113 1129_1137 1141_1149 1156-1243 1247_1254 1309-1333 1333_1345 1352_1360 1368_1376 1392-1411 1411_1419 1435_1447 1454_1466 1470_1482 1490-1509 1521_1529 1537_1544 1552_1560
102-153 157_165 172-208 212_223 231-251 251_259 263_274 278_290 302-325 361-380 380_392 396_408 416_427 431_443 455_466 470_482 490_498 514_521 533_545 549_561 572_580 592-615 623-643 651_659 686_694 706-749 796_808 811_823 827-851 878-902 921-941 941_949 956-992 1007-1027 1035_1047 1051_1058 1062_1074 1078_1086 1094-1113 1133_1145 1160-1184 1184_1192 1196_1207 1211_1231 1235_1239 1247_1258 1325-1345 1372_1384 1396_1407 1419-1439 1443-1462 1466_1478 1482-1501 1509_1521 1537_1548 1556_1568
125-145 141_153 165_188 200_208 212_223 235_243 247-267 270-294 306_314 365-384 400_412 419-482 486-506 517-537 537_545 549-568 572_584 623_635 690-713 717_729 745-764 800-858 878_890 921_929 937_945 956_964 968_980 1011-1031 1035_1043 1054_1066 1066-1086 1094_1105 1109-1133 1137_1149 1160_1168 1172-1223 1219_1227 1235_1239 1247_1254 1325-1352 1372_1380 1396-1415 1419_1427 1450_1458 1474_1486 1490_1501 1509-1537 1541_1552 1556-1568
125-145 145_153 165_172 180_192 204-235 235_243 247-270 274_282 290_302 310-329 368-388 400-423 427_435 443-482 490-510 521-561 533_545 572_580 623_635 694_702 706_717 729_737 800_811 815_823 827-851 886-906 937_945 960-984 1015-1043 1047_1054 1058-1082 1082_1094 1098-1121 1137-1184 1184_1192 1196_1207 1215_1227 1235_1239 1250_1258 1325_1337 1372_1384 1399_1411 1462-1501 1541-1564
129_137 141_153 165_172 216_227 235_247 251_263 274_282 290_302 310_321 372_380 404_412 431_443 443-466 470_482 494_506 521-541 541_553 576_588 627-651 710_721 733_741 800-843 847-874 886_894 937-960 960_972 976-1000 1015_1023 1035_1047 1054_1062 1070_1078 1086_1098 1102-1121 1137-1160 1160_1172 1180_1192 1196_1203 1211-1235 1254-1278 1329_1337 1376_1388 1399-1419 1462-1482 1490_1501 1556_1564
129_137 145_153 165_172 216_227 235_247 251-270 274_286 290_298 314_325 408_416 459_470 478_486 494_506 521-549 549_557 580_588 710-737 800-823 835_843 890-909 937-988 1047-1066 1070-1094 1094_1105 1113_1125 1145-1184 1184_1196 1203_1211 1215_1223 1227_1239 1254-1274 1333-1352 1407_1415 1474_1486 1490_1497
133_141 145-169 176_188 220-290 290_302 318_325 408_419 459_470 494_506 525-545 549_561 804_815 823-847 894_902 937-956 960-984 1054-1078 1078_1086 1105-1125 1149_1156 1160_1168 1180_1192 1196-1219 1219_1231 1239-1258 1258_1270 1407_1419 1474_1482 1490-1509
137_145 149_157 220-270 278-298 318_325 463-482 502_514 537-557 815_827 839-862 894_902 941_949 964-988 1054-1098 1105_1117 1164-1184 1192_1200 1203_1211 1219_1227 1235_1243 1407_1415 1474-1497
149_161 235-263 263_270 278_286 294_306 463_474 502_514 545_553 815-835 843-862 894_902 945_956 964-984 1058_1070 1074_1086 1105-1125 1164_1172 1180_1192 1200-1219 1223-1254 1474_1486 1490_1501` },
{ x: 1600, k: W, base: 225, ky: 2.442,
 cov: '0,185 6,216 18,218 22,165 27,143 34,178 42,205 50,178 56,152 66,150 72,158 80,122 88,110 94,130 98,165 106,180 114,168 124,176 134,198 142,165 147,122 152,142 160,182 168,186 174,145 182,175 194,200 196,172 210,165 220,175 228,172 234,130 240,152 248,180 256,165 259,120 265,112 268,78 274,102 284,110 288,160 300,205 308,206 314,160 320,128 328,166 336,158 348,130 354,142 362,190 374,188 382,205 390,190 396,140 402,120 410,130 418,120 422,160 430,145 438,165 448,155 456,172 464,145 468,117 474,120 480,155 488,165 494,125 502,142 514,150 522,152 532,145 540,107 546,145 554,170 558,200 564,172 574,145 578,116 584,135 592,120 600,145 608,165 614,120 622,118 628,185 632,160 640,172 648,210 664,220 668,195 676,192 682,220 684,225 758,225 760,220 770,218 774,150 778,88 782,68 786,100 788,140 792,168 804,165 810,176 824,190 830,205 844,200 858,175 862,88 868,90 872,150 880,168 888,152 896,122 902,155 910,175 918,200 922,165 934,150 942,165 954,155 964,172 974,152 982,165 992,178 1004,165 1014,140 1022,175 1038,160 1044,130 1054,138 1060,175 1068,152 1080,168 1088,145 1098,160 1108,152 1122,118 1130,145 1138,175 1144,200 1156,170 1164,190 1172,190 1178,145 1186,125 1192,88 1196,145 1204,172 1210,150 1220,150 1226,105 1234,120 1246,130 1250,150 1262,172 1266,195 1274,175 1284,170 1296,190 1304,145 1316,142 1324,180 1336,145 1348,152 1358,142 1368,150 1376,135 1384,172 1392,165 1402,140 1410,118 1414,105 1420,80 1424,118 1432,140 1440,155 1450,200 1462,155 1478,160 1486,155 1500,160 1504,127 1513,135',
 snp: '295r195b200 308b195g220 390b195g220 625r200b205 1167r200b205 1265r195b200',
 rows: `0_7 13_23 29_39 46_56 59_78 85_91 95_105 108-147 147_154 157-173 180_186 189-206 209_225 235_245 248_258 265-304 304_310 314_323 330_336 343-379 379_385 389-405 405_412 415-434 431_441 444_454 457_464 470-519 519_529 536_546 552-598 591_598 601_608 611_621 624_630 637_647 653-670 748<794 797_807 810_817 826_836 840_849 856_866 869_875 879-902 905-921 928_938 941_947 954-970 973_983 987-1013 1016_1022 1026-1068 1071-1104 1107-1166 1166_1173 1179_1189 1196_1205 1212_1218 1225_1235 1238_1245 1248_1254 1261_1271 1274-1294 1297_1303 1307-1362 1365-1414 1414_1421 1424_1431 1434_1441 1444_1450 1454_1460 1464_1473 1477_1486 1490-1506 1509-1513
10_20 23_33 36_46 49-69 69_78 82_88 91-108 108_114 118-137 134_140 147_157 163-180 183_193 196_202 209_219 222-242 242_251 255_261 265_271 278_284 291-310 314-343 343_353 359-376 379-402 405_412 418_425 434_444 448-483 483_493 497-546 546_562 568_578 581_591 595_604 611-647 663_670 768-784 791-826 830-866 872-892 892_902 905-973 973_983 993_1000 1003_1009 1016_1026 1032_1039 1045-1062 1062_1075 1081-1101 1101_1107 1114_1124 1130-1179 1179_1189 1196-1248 1248_1258 1264_1274 1277-1343 1346_1352 1356_1362 1369_1375 1379-1395 1395_1405 1411_1418 1424-1441 1447-1464 1464_1470 1480-1513
0-7 16-36 42_52 56_62 65-88 88_98 101_111 114_124 131-150 150_157 163-199 199_206 209-225 235_245 248_258 261-278 278_287 297_304 310-353 356_363 369-385 385_392 399-415 418_428 434_444 448_457 464_470 474-497 497_503 506_513 516_526 529-549 555_565 568-614 604_614 621-637 663_673 768-787 791-826 833-853 853_859 862_872 879-898 905_911 918_924 931-977 980_990 993_1003 1006-1022 1022_1029 1032_1042 1045-1068 1068_1075 1081-1101 1101_1111 1117_1124 1127_1130 1137_1143 1150_1160 1163-1202 1173_1179 1212_1218 1222_1232 1238-1267 1264_1281 1287-1313 1316-1349 1349_1359 1365_1372 1375-1411 1411_1421 1450_1457 1464-1483 1483_1490 1493_1503 1506_1513
16_26 33-49 52-69 69_78 82_88 91-118 121_127 131_140 154_163 167-193 199-216 222-245 245_251 255_274 278-297 304_310 317_327 333-350 350_359 363-379 382-415 418_425 434-451 451_461 464_474 477-503 493_503 513-575 575_591 604-621 627_637 663-683 768-787 794-810 813_823 836-856 856_866 872-908 915_921 928-947 947_957 960-980 983_993 996_1006 1009-1029 1036_1045 1049-1068 1068_1075 1081-1098 1101-1140 1143_1153 1163-1225 1228_1238 1245_1254 1267-1294 1294_1307 1310_1323 1326-1395 1392_1401 1405_1411 1414-1431 1427_1437 1450_1457 1460_1470 1480-1496 1499_1509
16_23 42-98 105-127 134_144 150_160 167-183 189_199 203-225 222_232 235_245 251-268 271_281 304-323 327_333 336_343 353_372 385-421 421_431 438_448 454-474 480_487 493_503 506-529 532_542 555-581 585-601 604_614 627_634 637_647 666_676 768-787 797_804 817_823 833_843 849-869 875-921 908_928 938-970 970_983 987-1013 1018-1042 1045-1078 1081_1091 1094_1101 1104_1114 1117-1134 1137_1147 1150_1160 1166_1176 1179-1189 1196_1209 1212-1228 1228_1238 1241-1261 1264_1274 1284_1290 1294-1313 1316-1343 1343_1352 1359-1379 1382_1392 1395-1411 1418_1424 1427-1444 1450-1473 1483_1493 1499_1509
16_23 49_56 59-114 114_124 134_140 144_154 160-196 199_209 216_225 228_238 245_251 255_265 271-287 307-323 327-343 343_353 363_372 389_399 405_412 418_428 438_448 454-490 480_490 493-519 510_519 523-562 568-588 588_591 608-644 666_676 771_781 797-813 820-840 843_849 853-869 872_885 892-911 918_924 928_938 944-983 983_993 996_1003 1006_1016 1022-1068 1071_1081 1088-1137 1147_1156 1173-1192 1196-1212 1212_1222 1222_1228 1232-1258 1277_1284 1290-1323 1316_1323 1330-1346 1346_1356 1359-1369 1379_1388 1392_1401 1405_1411 1414_1421 1427-1444 1450_1460 1464_1477 1483-1509
20-39 49_59 62_72 75-98 91_98 105_114 134_144 157-173 173_183 189_199 206_212 222_232 238_245 248_258 261-301 310-330 330_336 343_353 389_399 405_415 421_428 438_448 454_464 467_477 480_490 493_503 506_516 510_519 529-549 559_568 572-595 608_617 630-657 771_781 800-820 836_846 849_859 866-908 918-951 960-977 983-1013 1003_1013 1022-1049 1049_1058 1071-1081 1091_1107 1111_1120 1124_1130 1147_1153 1173_1183 1186_1196 1199-1245 1248-1264 1271_1281 1297_1303 1310-1326 1330-1375 1388_1395 1398_1408 1411_1421 1424_1434 1437-1490 1493-1509
0-7 20-36 49-101 108_118 137_147 160_167 170_180 193_202 206_212 222_232 238_248 255-274 271_281 310-333 333_336 336-366 389-405 408_415 421_428 438_448 454_464 470_480 483_493 497_503 506_516 523_532 536_546 552_562 568_578 585-611 611_621 630-650 771_781 800-817 843-875 879-908 921_931 938_944 951_960 967_977 1003-1019 1026_1036 1039_1049 1052-1068 1068_1078 1091_1098 1101_1111 1114-1134 1130_1140 1150-1166 1173_1183 1189_1199 1202-1222 1222_1228 1232_1241 1248-1264 1274_1284 1300-1316 1330-1349 1352_1359 1365_1375 1379-1395 1395_1405 1408_1414 1418_1428 1434_1441 1454-1473 1473_1480 1486_1496 1499_1509
52_62 20_29 65-82 82_91 98-114 114_124 137-154 167_176 193-212 216-235 248_258 258-284 310-330 333_343 392-444 448_457 464_474 483_493 500_506 513-532 532_539 546-565 572_581 585-604 608_617 630_640 771_781 804_810 846_856 862-879 882-902 924-944 947_957 964-980 1003-1032 1032_1042 1052-1071 1071_1081 1091_1098 1104_1111 1117_1124 1127_1137 1153-1169 1173_1183 1186_1192 1196_1202 1218-1245 1218_1232 1254-1284 1300_1310 1330-1352 1352_1359 1365-1382 1388_1398 1405-1447 1457-1477 1486-1513
20_29 52_62 69_75 85_91 98_105 118-134 137_147 167_173 196_206 225-242 251_258 265-281 284_294 310-327 336_346 392_402 408_418 425_434 441_448 457_464 467-487 487_497 506_516 519-552 562-578 578_588 591_598 608_617 634_644 771-787 804-820 853-875 885-902 924_931 947_954 967_977 1006-1029 1032_1042 1055_1065 1068_1078 1091-1124 1130_1140 1153_1163 1176-1192 1202-1218 1218_1228 1232_1241 1281_1290 1300-1320 1333-1352 1356_1362 1365_1372 1379-1401 1405-1431 1427_1437 1457_1464 1470_1480 1486-1506 1506_1513
23_29 52-75 75_85 91_101 140-163 170_176 203_209 225-245 251-271 274_284 314_323 327-353 392-412 425_434 441_448 457-480 493_503 506_516 519_529 532_539 565_575 581_588 591_598 608_617 771_777 853-869 885_895 924_934 951_960 967_977 1009-1036 1039-1055 1075-1124 1134_1140 1176-1192 1205_1215 1218_1228 1238-1254 1300_1307 1313-1330 1330_1339 1346-1362 1365_1372 1388-1405 1405_1411 1414_1424 1428-1444 1460-1480 1496-1513
23-46 56_62 69_78 85_95 140_147 170_176 225_235 255-271 274-291 314-336 340_350 392-408 408_418 425-441 457-474 490_497 506_516 529-546 565-578 578_588 591_598 608_617 771_781 856_866 885_895 931-947 951_960 967-983 1009_1019 1039-1065 1075-1094 1098-1134 1176-1192 1205_1212 1218-1238 1241-1274 1300_1310 1339-1375 1392_1401 1408_1414 1418-1434 1434_1441 1473_1480 1496_1506 1509-1513
59-75 75_85 140_147 229-248 255-294 314_320 340-359 395_405 412_418 425-441 461_467 490-506 506_513 519-536 539_549 575-595 608_617 771_777 856_866 885_895 931_938 973-990 1009-1026 1075_1085 1098_1107 1111_1120 1124_1130 1176-1199 1222-1251 1303_1313 1339_1349 1359_1369 1372_1382 1395-1411 1414_1421 1437-1463 1473-1490 1496-1513
72_78 85_91 140-167 229_238 255-274 274_284 314-336 340-359 399-421 425-441 461-477 490_500 532_539 575-591 611_621 771-797 859_866 892_902 931_941 977_987 1042_1052 1075-1098 1104-1127 1176-1199 1222-1241 1241_1248 1307_1313 1339_1349 1352-1388 1395_1405 1408_1414 1418-1434 1437_1447 1473_1483 1499_1506` }
]};

const COLORS = { r: '#f00', g: '#0f0', b: '#00f', o: '#d07000' };
const snap = v => 2 * Math.round(v / 2);
const box = (x0, y0, x1, y1) => `M${x0} ${y0}H${x1}V${y1}H${x0}z`;

function draw(id, s, dots) {
  let cov = '', reads = '', soft = '', snps = '';
  for (const t of s.tiles) {
    const px = v => snap(t.x + v / t.k);
    const hy = v => s.base - snap((t.base - v) / t.ky);
    const pts = t.cov.split(' ').map(p => p.split(',').map(Number));
    let i = 0;
    const end = px(pts[pts.length - 1][0]);
    for (let x = px(pts[0][0]); x < end; x += 2) {
      const u = (x + 1 - t.x) * t.k;
      while (i < pts.length - 2 && pts[i + 1][0] < u) i++;
      const [a, ya] = pts[i], [b, yb] = pts[i + 1];
      const f = Math.max(0, Math.min(1, (u - a) / (b - a)));
      const y = hy(ya + (yb - ya) * f);
      if (y < s.base) cov += box(x, y, x + 2, s.base);
    }
    for (const m of t.snp.split(' ')) {
      const x = snap(t.x + parseInt(m) / t.k - 1);
      for (const c of m.matchAll(/([rgbo])(\d+)/g))
        snps += `<path fill="${COLORS[c[1]]}" d="${box(x, hy(+c[2]), x + 2, s.base)}"/>`;
    }
    t.rows.split('\n').forEach((row, r) => {
      for (const m of row.matchAll(/(\d+)([-_<>])(\d+)/g)) {
        const a = px(+m[1]), b = px(+m[3]);
        const y = s.top + 28 * r + (m[2] === '_' ? 2 : 0);
        if (m[2] === '<') soft += `M${a} ${y + 12}L${a + 4} ${y}H${b}V${y + 24}H${a + 4}z`;
        else if (m[2] === '>') soft += `M${b} ${y + 12}L${b - 4} ${y}H${a}V${y + 24}H${b - 4}z`;
        else reads += box(a, y, b, y + 24);
      }
    });
  }
  const marks = dots.map(([x, y]) => `<path fill="#777" d="${box(x - 4, y - 3, x + 4, y + 3)}"/><path d="${box(x - 2, y - 2, x + 2, y + 2)}"/>`).join('');
  document.getElementById(id).innerHTML =
    `<g shape-rendering="crispEdges"><path class="cov" d="${cov}"/>${snps}
     <path fill="#808080" d="${box(346, s.line, 2526, s.line + 2)}"/><path class="reads" d="${reads}"/></g>
     <path class="reads" d="${soft}"/>${marks}
     <path d="M1435 ${s.top}V${s.bottom}" stroke="#808080" stroke-width="2" stroke-dasharray="18 4 6 0"/>
     <path d="M1435 ${s.top + 2}V${s.bottom}" stroke="#000" stroke-width="2" stroke-dasharray="16 6 2 4"/>
     <text class="range" x="354" y="${s.base - 58}">[0 - 28]</text>`;
}
draw('sample1', sample1, [[1012, 549], [1970, 549]]);
draw('sample2', sample2, [[566, 1109], [1884, 1109], [1640, 1193], [1958, 1360]]);

let ruler = `<g shape-rendering="crispEdges"><path d="M346 162H2526V184H346z"/><path fill="#fff" d="M348 164H2526V182H348z"/>
<path fill="none" stroke="#c8c8d6" stroke-width="2" d="M347 363V233H2525V363z"/>
<path d="M346 364H2526V366H348V384H346z"/><path d="M348 284H1386V286H348zM1486 284H2524V286H1486z"/>
<path fill="none" stroke="#f00" stroke-width="6" d="M1433 163h10v20h-10z"/></g>
<path d="M352 285l8-4h6v8h-6zM2522 285l-8-4h-8v8h8z" stroke="#000"/>
<text class="span" x="1435.500" y="294">14 kb</text>`;
for (let k = 0; k <= 14; k++) {
  const x = 381 + 154.04 * k;
  if (x < 2500) ruler += `<path shape-rendering="crispEdges" d="${box(snap(x - 1), 344, snap(x - 1) + 2, 362)}"/>`;
  if (k % 2 === 0) ruler += `<text class="tick" x="${x - 1}" y="333.500">2,${320 + k} kb</text>`;
}
document.getElementById('ruler').innerHTML = ruler;
```
